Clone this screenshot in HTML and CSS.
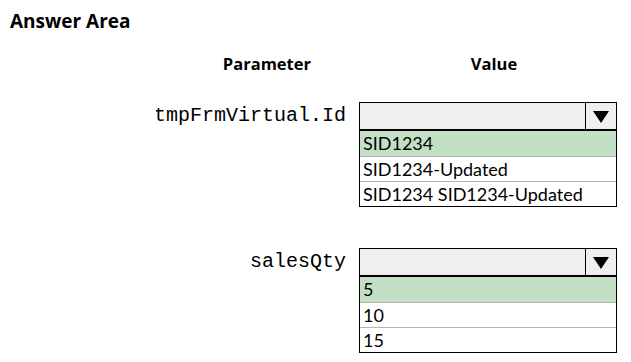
FILE: index.html
```html
<!DOCTYPE html>
<html lang="en">
<head>
    <meta charset="UTF-8">
    <title>Answer Area</title>
    <link rel="stylesheet" href="styles.css">
</head>
<body>
    <h2 class="title">Answer Area</h2>
    <div class="grid">
        <div class="col-head col-head--param">Parameter</div>
        <div class="col-head col-head--value">Value</div>

        <div class="param">tmpFrmVirtual.Id</div>
        <div class="dropdown">
            <div class="dropdown__head">
                <div class="dropdown__field"></div>
                <div class="dropdown__btn"><span class="arrow"></span></div>
            </div>
            <div class="option option--selected">SID1234</div>
            <div class="option">SID1234-Updated</div>
            <div class="option">SID1234 SID1234-Updated</div>
        </div>

        <div class="param">salesQty</div>
        <div class="dropdown">
            <div class="dropdown__head">
                <div class="dropdown__field"></div>
                <div class="dropdown__btn"><span class="arrow"></span></div>
            </div>
            <div class="option option--selected">5</div>
            <div class="option">10</div>
            <div class="option">15</div>
        </div>
    </div>
</body>
</html>
```
FILE: styles.css
```css
html{
    font-family: "Open Sans", sans-serif;
}
body{
    margin: 0;
    background: #fff;
    color: #000;
}
.title{
    margin: 0;
    padding: 8px 0 0 10px;
    font-size: 19px;
    font-weight: bold;
}
.grid{
    display: grid;
    grid-template-columns: 346px 258px;
    column-gap: 13px;
    row-gap: 41px;
    margin-top: 18px;
}
.col-head{
    font-size: 16.5px;
    font-weight: bold;
    margin-bottom: -14px;
}
.col-head--param{
    text-align: right;
    padding-right: 35px;
}
.col-head--value{
    text-align: center;
    padding-left: 12px;
}
.param{
    font-family: "Liberation Mono", monospace;
    font-size: 20px;
    text-align: right;
    height: 28px;
    line-height: 28px;
}
.dropdown{
    border: 1px solid #000;
}
.dropdown__head{
    display: flex;
    height: 26px;
    background: #efefef;
    border-bottom: 2px solid #000;
}
.dropdown__field{
    flex: 1;
}
.dropdown__btn{
    width: 30px;
    border-left: 1px solid #000;
    display: flex;
    align-items: center;
    justify-content: center;
}
.arrow{
    width: 0;
    height: 0;
    border-left: 8px solid transparent;
    border-right: 8px solid transparent;
    border-top: 12px solid #000;
    margin-top: 2px;
}
.option{
    font-family: Lato, sans-serif;
    font-size: 18px;
    height: 24px;
    line-height: 25px;
    padding-left: 3px;
    border-top: 1px solid #b4b4b4;
}
.dropdown__head + .option{
    border-top: none;
    height: 25px;
}
.option--selected{
    background: #c4e0c4;
}
```
